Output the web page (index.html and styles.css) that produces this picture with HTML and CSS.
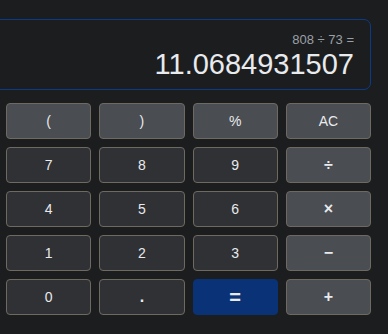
FILE: index.html
```html
<!DOCTYPE html>
<html lang="en">
<head>
    <meta charset="UTF-8">
    <meta name="viewport" content="width=device-width, initial-scale=1.0">
    <title>Calculator</title>
    <link rel="stylesheet" href="styles.css">
</head>
<body>

    <div class="calculator">
        <!-- Display -->
        <div class="display">
            <div class="expression">808 ÷ 73 =</div>
            <div class="result">11.0684931507</div>
        </div>

        <!-- Keypad -->
        <div class="keypad">
            <button class="key func">(</button>
            <button class="key func">)</button>
            <button class="key func">%</button>
            <button class="key func">AC</button>

            <button class="key">7</button>
            <button class="key">8</button>
            <button class="key">9</button>
            <button class="key func op">÷</button>

            <button class="key">4</button>
            <button class="key">5</button>
            <button class="key">6</button>
            <button class="key func op">×</button>

            <button class="key">1</button>
            <button class="key">2</button>
            <button class="key">3</button>
            <button class="key func op">−</button>

            <button class="key">0</button>
            <button class="key dot">.</button>
            <button class="key equals">=</button>
            <button class="key func op">+</button>
        </div>
    </div>

</body>
</html>
```

FILE: styles.css
```css
body {
    margin: 0;
    padding: 0;
    background-color: #1c1d1f;
    color: #e8eaed;
    font-family: 'Liberation Sans', Arial, sans-serif;
    overflow: hidden;
}
.calculator {
    width: 365px;
    padding: 19px 0 0 6px;
}
.display {
    margin-left: -30px;
    border: 1px solid #0d3a86;
    border-radius: 7px;
    padding: 12px 16px 8px;
    text-align: right;
}
.expression {
    font-size: 13px;
    line-height: 15px;
    color: #9aa0a6;
}
.result {
    font-size: 29px;
    line-height: 33px;
    margin-top: 1px;
    color: #e8eaed;
}
.keypad {
    display: grid;
    grid-template-columns: repeat(4, 1fr);
    gap: 8px;
    margin-top: 13px;
}
.key {
    height: 36px;
    background-color: #303134;
    border: 1px solid #6e6a62;
    border-radius: 4px;
    color: #e8eaed;
    font-family: 'Liberation Sans', Arial, sans-serif;
    font-size: 14px;
    padding: 0;
    cursor: pointer;
}
.key.func {
    background-color: #4a4d51;
}
.key.op {
    font-size: 16px;
    font-weight: bold;
}
.key.dot {
    font-size: 16px;
    font-weight: bold;
}
.key.equals {
    background-color: #0a3276;
    border-color: #0a3276;
    font-size: 20px;
    font-weight: bold;
}
```
